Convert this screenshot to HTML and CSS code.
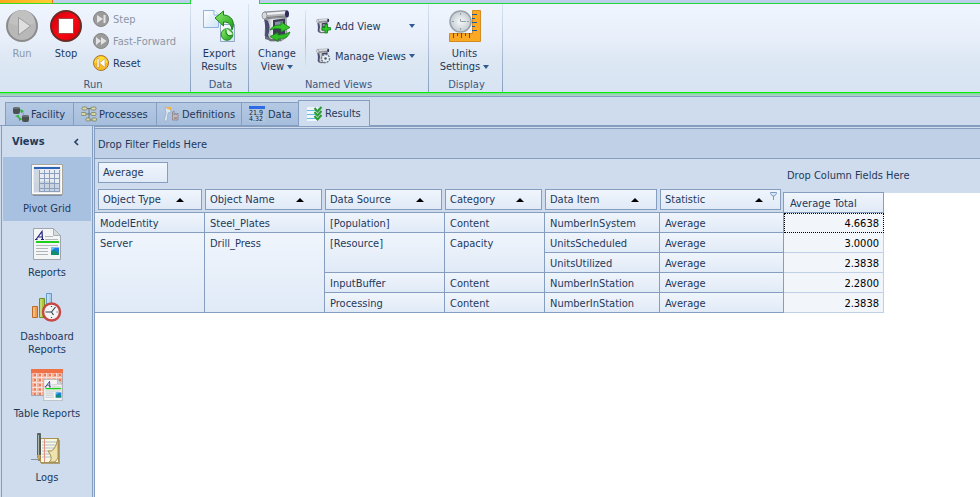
FILE: index.html
```html
<!DOCTYPE html>
<html lang="en">
<head>
<meta charset="utf-8">
<title>Results</title>
<link rel="stylesheet" href="styles.css">
</head>
<body>
<svg class="defs" aria-hidden="true">
  <defs>
    <linearGradient id="green" x1="0" y1="0" x2="1" y2="1"><stop offset="0" stop-color="#8cf06a"/><stop offset="1" stop-color="#1f9a1c"/></linearGradient>
    <linearGradient id="page" x1="0" y1="0" x2="1" y2="1"><stop offset="0" stop-color="#fff"/><stop offset="1" stop-color="#cfe3f7"/></linearGradient>
    <linearGradient id="steel" x1="0" y1="0" x2="1" y2="0"><stop offset="0" stop-color="#8d8f95"/><stop offset=".35" stop-color="#eceef0"/><stop offset="1" stop-color="#a5a7ad"/></linearGradient>
    <linearGradient id="stop" x1="0" y1="0" x2="1" y2="1"><stop offset="0" stop-color="#c80010"/><stop offset=".5" stop-color="#ff0812"/><stop offset="1" stop-color="#d0000c"/></linearGradient>
    <radialGradient id="dial"><stop offset="0" stop-color="#f7f9fa"/><stop offset="1" stop-color="#c3ccd2"/></radialGradient>
    <symbol id="camera" viewBox="0 0 32 32">
      <path d="M5 8L25 6L26 27L20 31L9 31L4 26Z" fill="url(#steel)" stroke="#83858c" stroke-width=".8"/>
      <path d="M3 9L7 11Q10 18 7 25L10 31L4 27Q5 17 3 9Z" fill="#4a4b70"/>
      <path d="M12 10L24 8.500V24L12 26Z" fill="#3a3c54"/>
      <path d="M14 12L22 11V16L14 17Z" fill="#8a91ac"/>
      <path d="M3 2L26 .500Q28 4 26 7L4 9Q1 6 3 2Z" fill="#b2b4b9" stroke="#77797f" stroke-width=".8"/>
      <path d="M5 4L24 2.500" stroke="#f2f3f5" stroke-width="2"/>
      <path d="M6 7.500L24 6" stroke="#777980"/>
      <ellipse cx="3.500" cy="5.500" rx="2.500" ry="3.500" fill="#d8d9dc" stroke="#85878d" stroke-width=".8"/>
      <ellipse cx="26" cy="4" rx="2" ry="3.500" fill="#2c2c5c"/>
      <path d="M4 26L11 29L20 28.500V31H10L4 29Z" fill="#6e7078"/>
    </symbol>
    <symbol id="report" viewBox="0 0 28 32">
      <path d="M.5.500H20.500L27.500 7.500V31.500H.5Z" fill="#f4f5f5" stroke="#9fa5aa"/>
      <path d="M20.500.500V7.500H27.500Z" fill="#d5dadd" stroke="#aab0b5"/>
      <path d="M3 11.500L9 3.500L9.500 11.500M5.500 9H9M2 11.500H4.500M8 11.500H11" fill="none" stroke="#28257c" stroke-width="1.200"/>
      <path d="M12 8.500H20M12 11.500H25M3 17.500H25" stroke="#b4b8ba"/>
      <path d="M3 14H26" stroke="#20ce1c" stroke-width="2"/>
      <path d="M3 20.500H15M3 23.500H15M3 26.500H15" stroke="#aeb4b7"/>
      <path d="M18 19.500H26V27H18Z" fill="#1b7de0"/><path d="M18 27V24L21 22L26 25V27Z" fill="#128d70"/><path d="M18 20H22L18 23Z" fill="#5cc6f2"/>
    </symbol>
  </defs>
</svg>

<header class="ribbon">
  <div class="ribbon-tabs"><span class="app-tab"></span><span class="strip"></span><span class="open-tab"></span><span class="strip rest"></span></div>
  <div class="groups">
    <section class="group run-group">
      <div class="tools">
        <button class="big" disabled>
          <svg class="i32" viewBox="0 0 32 32"><circle cx="16" cy="16" r="15" fill="#b8b8b8" stroke="#8b8b8b" stroke-width="2"/><path d="M3 13A13 13 0 0 1 29 13Q16 19 3 13Z" fill="#c1c1c1"/><path d="M12.500 7.500L24.500 16L12.500 25Z" fill="#dedede" stroke="#9b9b9b"/></svg>
          <span>Run</span>
        </button>
        <button class="big">
          <svg class="i32" viewBox="0 0 32 32"><circle cx="16" cy="16" r="15" fill="url(#stop)" stroke="#6b2a24" stroke-width="2"/><path d="M8.500 8.500H23.500V23.500H8.500Z" fill="#fff" stroke="#a44"/></svg>
          <span>Stop</span>
        </button>
        <div class="stack">
          <button class="small" disabled><svg class="i16" viewBox="0 0 16 16"><circle cx="8" cy="8" r="7.500" fill="#9b9b9b" stroke="#858585"/><path d="M4 4L10 8L4 12ZM10.500 4H12.500V12H10.500Z" fill="#e4e4e4"/></svg>Step</button>
          <button class="small" disabled><svg class="i16" viewBox="0 0 16 16"><circle cx="8" cy="8" r="7.500" fill="#9b9b9b" stroke="#858585"/><path d="M3 4L8 8L3 12ZM8 4L13.500 8L8 12Z" fill="#e4e4e4"/></svg>Fast-Forward</button>
          <button class="small"><svg class="i16" viewBox="0 0 16 16"><circle cx="8" cy="8" r="7.500" fill="#f8bd1c" stroke="#a9743a"/><path d="M1.500 8A6.500 6.500 0 0 1 14.500 8Z" fill="#ffe02e"/><path d="M4 3.500H6V12.500H4ZM12 3.500V12.500L6.500 8Z" fill="#fff" stroke="#c6924a" stroke-width=".6"/></svg>Reset</button>
        </div>
      </div>
      <h2>Run</h2>
    </section>
    <section class="group data-group">
      <div class="tools">
        <button class="big">
          <svg class="i32" viewBox="0 0 32 32"><path d="M.5.500H11L15.500 5V17.500H.5Z" fill="url(#page)" stroke="#8db4dc"/><path d="M11 .5V5H15.500" fill="#fff" stroke="#8db4dc"/><path d="M17.500 14.500H31.500V31.500H17.500Z" fill="url(#page)" stroke="#91a7c4"/><path d="M12 8L20.500 1V5C28 5 33 12 29 20C28 14 26 12 20.500 12V16Z" fill="url(#green)" stroke="#17811a"/><circle cx="24" cy="24.500" r="5.800" fill="url(#green)" stroke="#188b1b"/><path d="M23.500 18.500L30 24L26 25.500Q23 23 23.500 18.500Z" fill="#dff3dc"/><path d="M23 20Q22 26 28.500 26" fill="none" stroke="#137c17"/></svg>
          <span>Export<br>Results</span>
        </button>
      </div>
      <h2>Data</h2>
    </section>
    <section class="group views-group">
      <div class="tools">
        <button class="big">
          <svg class="i32" viewBox="0 0 32 32"><use href="#camera" width="32" height="32"/><path d="M9 20Q12 14.500 20 15V12L29 17.500L20 22V19Q14 17.500 9 20Z" fill="#35c92b" stroke="#177a18" stroke-width=".8"/><path d="M29 22Q27 29.500 17 29V31.500L9 26.500L17 22.500V25Q24 25.500 29 22Z" fill="#2fbe26" stroke="#177a18" stroke-width=".8"/></svg>
          <span>Change<br>View <i class="drop"></i></span>
        </button>
        <div class="divider"></div>
        <div class="stack wide">
          <button class="small"><svg class="i16" viewBox="0 0 16 16"><use href="#camera" width="15" height="16"/><path d="M9 6.500H11.500V9.500H14.500V12H11.500V15H9V12H6V9.500H9Z" fill="#2dc926" stroke="#0b8512" stroke-width=".8"/></svg>Add View<i class="drop"></i></button>
          <button class="small"><svg class="i16" viewBox="0 0 16 16"><use href="#camera" width="15" height="16"/><circle cx="9.500" cy="10.500" r="4" fill="#e3eaf0" stroke="#6d7d8d" stroke-width="1.500" stroke-dasharray="2 1"/><circle cx="9.500" cy="10.500" r="3" fill="#e9eff4"/><circle cx="9.500" cy="10.500" r="1.300" fill="#4d5a6a"/></svg>Manage Views<i class="drop"></i></button>
        </div>
      </div>
      <h2>Named Views</h2>
    </section>
    <section class="group display-group">
      <div class="tools">
        <button class="big">
          <svg class="i32" viewBox="0 0 32 32"><path d="M23.500.500H31.500V31.500H.5V23.500H23.500Z" fill="#fba922" stroke="#d28c22"/><path d="M23 4.500H28M23 8.500H26M23 12.500H28M23 16.500H26M23 20.500H28M4.500 23V28M8.500 23V26M12.500 23V28M16.500 23V26M20.500 23V28" stroke="#1c5b9c"/><circle cx="11.500" cy="11.500" r="10.500" fill="url(#dial)" stroke="#98a2a8" stroke-width="1.500"/><path d="M11.500 3V5M11.500 18V20M3 11.500H5M18 11.500H20M11.500 9V11.500H17" fill="none" stroke="#96a0a7"/></svg>
          <span>Units<br>Settings <i class="drop"></i></span>
        </button>
      </div>
      <h2>Display</h2>
    </section>
  </div>
</header>

<nav class="tabs">
  <a href="#facility" class="tab facility"><svg class="i16" viewBox="0 0 16 16"><rect x="0" y="1" width="7" height="7" rx="2" fill="#4c5052"/><path d="M1 2H6" stroke="#888e91"/><rect x="9" y="9" width="7" height="7" rx="2" fill="#4c5052"/><path d="M10 10H15" stroke="#888e91"/><path d="M9 5L11 9M4 9L6 13L9 13" fill="none" stroke="#8a9ba8"/><path d="M7 3L11 5L8 7ZM2 10L6 9L6 12ZM6 11L9 13L6 15Z" fill="#28b62d"/></svg>Facility</a>
  <a href="#processes" class="tab processes"><svg class="i16" viewBox="0 0 16 16"><path d="M3 2.500H12M8 2V14M3 8H13M8 14H13" stroke="#6e7b78" fill="none"/><g fill="#d8d9a4" stroke="#7b8064" stroke-width=".8"><rect x="1" y="1" width="5" height="3" rx="1"/><rect x="0" y="6.500" width="5" height="3" rx="1"/><rect x="10" y="1" width="5" height="3" rx="1"/><rect x="10" y="6.500" width="5" height="3" rx="1"/><rect x="5" y="12" width="4" height="3" rx="1"/><rect x="11" y="12" width="4.500" height="3" rx="1"/></g></svg>Processes</a>
  <a href="#definitions" class="tab definitions"><svg class="i16" viewBox="0 0 16 16"><path d="M1 1L6 2L7 6L4 7L3 15H0L2 7Z" fill="#dce8f1" stroke="#9aaabd" stroke-width=".7"/><path d="M2 1L7 1L7 4L3 3Z" fill="#f1b14c"/><path d="M8.500 14V6L10 5V9L12 7V9L14 7V14Z" fill="#c9b9b4" stroke="#8a8288" stroke-width=".8"/><path d="M10 12H13" stroke="#776f7a"/></svg>Definitions</a>
  <a href="#data" class="tab data"><svg class="i16" viewBox="0 0 16 16"><path d="M0 0H16V3H0Z" fill="#2e6be4"/><path d="M0 3H16V16H0Z" fill="#b4c6dc"/><text x="0" y="9">21.9</text><text x="0" y="15">4.32</text></svg>Data</a>
  <a href="#results" class="tab results" aria-current="page"><svg class="i16" viewBox="0 0 16 16"><path d="M0 1H11V15H0Z" fill="#eef7fc"/><path d="M0 4.500H9M0 8.500H9M0 12.500H9" stroke="#6bb9d9"/><path d="M7.500 2L10.500 5.500L14.500 1M7.500 6L10.500 9.500L14.500 5M7.500 10L10.500 13.500L14.500 9" fill="none" stroke="#2a9c32" stroke-width="2"/></svg>Results</a>
</nav>

<div class="workspace">
  <aside class="sidebar">
    <div class="side-head"><h2>Views</h2><button aria-label="Collapse"><svg viewBox="0 0 6 8"><path d="M5 1L2 4L5 7" fill="none" stroke="#2d4468" stroke-width="1.700"/></svg></button></div>
    <a href="#pivot" class="view selected"><svg class="i32" viewBox="0 0 32 32"><path d="M2 31H31" stroke="#8191aa" stroke-width="2"/><path d="M1.500 1.500H30.500V29.500H1.500Z" fill="#e9edf1" stroke="#fff"/><path d="M.5.500H31.500V30.500H.5Z" fill="none" stroke="#a8a59f"/><path d="M3 3H29V5H3Z" fill="#2e62b4"/><path d="M3 5H8V28H3Z" fill="#cfd7e0"/><path d="M3 19Q18 14 29 21V28H3Z" fill="#cbd3de"/><path d="M8.500 6V28M13.500 6V28M18.500 6V28M23.500 6V28M28.500 6V28M8 9.500H29M8 14.500H29M8 19.500H29M8 24.500H29M8 27.500H29" stroke="#8b9fbf"/></svg>Pivot Grid</a>
    <a href="#reports" class="view"><svg class="i32" viewBox="0 0 32 32"><use href="#report" x="2" width="28" height="32"/></svg>Reports</a>
    <a href="#dashboard" class="view"><svg class="i32" viewBox="0 0 32 32"><path d="M1.500 14.500H6.500V25.500H1.500Z" fill="#f29d4b" stroke="#ba6b27"/><path d="M8.500 6.500H13.500V25.500H8.500Z" fill="#a9ca3c" stroke="#6f8f24"/><path d="M15.500 1.500H20.500V14H15.500Z" fill="#a8d2f4" stroke="#6797c6"/><path d="M3 15V25M10 7V25M17 2V14" stroke="#fff" stroke-opacity=".6"/><circle cx="20.500" cy="20" r="8.500" fill="#f3f5f5" stroke="#c54944" stroke-width="2.500"/><path d="M20.500 14V15M26.500 20H25.500M20.500 26V25M15.500 20H14.500M24.500 15L20.500 20H15.500M20.500 20L22.500 23" fill="none" stroke="#36465a" stroke-width="1.200"/></svg>Dashboard<br>Reports</a>
    <a href="#tables" class="view"><svg class="i32" viewBox="0 0 32 32"><path d="M.5.500H31.500V26.500H.5Z" fill="#f5b39e" stroke="#a9a3ac"/><path d="M0 0H32V4H0Z" fill="#ee7148"/><path d="M5.500 4V26M10.500 4V26M15.500 4V26M20.500 4V26M25.500 4V26M1 8.500H31M1 13.500H31M1 18.500H31M1 22.500H31" stroke="#f7ded5"/><path d="M3 6H30M3 11H30M3 16H30M3 20.500H30M3 25H30" stroke="#e8795a" stroke-width="2" stroke-dasharray="2 3"/><use href="#report" x="12" y="10" width="20" height="22"/></svg>Table Reports</a>
    <a href="#logs" class="view"><svg class="i32" viewBox="0 0 32 32"><path d="M8 7H29V31H10Z" fill="#aaa07e"/><path d="M9.500 5.500H27.500V29.500H9.500Z" fill="#fbf7dc" stroke="#aa9152"/><path d="M11 9H27M11 12H27M11 15H27M11 18H27M11 21H27M11 24H27" stroke="#a9bfd2"/><path d="M13.500 6V29" stroke="#e2928a"/><path d="M18 29Q23 26 17 18Q24 20 27 5.500V25L24 29Z" fill="#eee2ae" stroke="#a79254"/><path d="M6.500.500H9.500V23L8 28L6.500 23Z" fill="#53615c" stroke="#303b3a" stroke-width=".6"/><path d="M7.500 2V22" stroke="#a9b8af"/><path d="M0 26.500H8" stroke="#8292a1"/><path d="M6 22H10L8 28Z" fill="#c7a457"/></svg>Logs</a>
  </aside>

  <main class="pivot">
    <div class="filter-area">Drop Filter Fields Here</div>
    <div class="drop-row"><button class="field">Average</button><span class="column-area">Drop Column Fields Here</span></div>
    <table>
      <colgroup><col class="c-type"><col class="c-name"><col class="c-source"><col class="c-cat"><col class="c-item"><col class="c-stat"><col class="c-total"></colgroup>
      <thead>
        <tr>
          <th><button class="field">Object Type<i class="asc"></i></button></th>
          <th><button class="field">Object Name<i class="asc"></i></button></th>
          <th><button class="field">Data Source<i class="asc"></i></button></th>
          <th><button class="field">Category<i class="asc"></i></button></th>
          <th><button class="field">Data Item<i class="asc"></i></button></th>
          <th><button class="field">Statistic<i class="asc"></i><svg class="funnel" viewBox="0 0 7 8"><path d="M.5.500H6.500V1.500L4.500 4H2.500L.5 1.500Z" fill="#dce7f4" stroke="#7b98c2"/><path d="M3.500 4V8" stroke="#7b98c2"/></svg></button></th>
          <th class="total"><div>Average Total</div></th>
        </tr>
      </thead>
      <tbody>
        <tr><td>ModelEntity</td><td>Steel_Plates</td><td>[Population]</td><td>Content</td><td>NumberInSystem</td><td>Average</td><td class="value focused">4.6638</td></tr>
        <tr><td rowspan="4">Server</td><td rowspan="4">Drill_Press</td><td rowspan="2">[Resource]</td><td rowspan="2">Capacity</td><td>UnitsScheduled</td><td>Average</td><td class="value">3.0000</td></tr>
        <tr><td>UnitsUtilized</td><td>Average</td><td class="value">2.3838</td></tr>
        <tr><td>InputBuffer</td><td>Content</td><td>NumberInStation</td><td>Average</td><td class="value">2.2800</td></tr>
        <tr><td>Processing</td><td>Content</td><td>NumberInStation</td><td>Average</td><td class="value">2.3838</td></tr>
      </tbody>
    </table>
  </main>
</div>
</body>
</html>
```
FILE: styles.css
```css
:root {
  --ink: #1e395b;
  --line: #859ebf;
  --panel: #cfdced;
  --area: #c0d0e6;
}
*, ::before, ::after { box-sizing: border-box; }
body {
  margin: 0;
  min-height: 100vh;
  display: flex;
  flex-direction: column;
  font: 11px/13px "DejaVu Sans Condensed", "DejaVu Sans", sans-serif;
  color: var(--ink);
  background: var(--panel);
}
h2 { margin: 0; font-size: 11px; line-height: 13px; }
button { font: inherit; color: inherit; margin: 0; padding: 0; border: 0; background: none; white-space: nowrap; }
a { color: inherit; text-decoration: none; }
svg { display: block; flex: none; }
.defs { position: absolute; width: 0; height: 0; }
.i32 { width: 32px; height: 32px; }
.i16 { width: 16px; height: 16px; }

/* Ribbon */
.ribbon { border-bottom: 1px solid var(--line); background: linear-gradient(#eff6ff, #e8effa 40%, #dde8f4 60%, #d7e3f2); }
.ribbon-tabs { display: flex; height: 4px; }
.app-tab { width: 53px; background: linear-gradient(90deg, #f9a81d, #ffcf33); border-right: 1px solid #e8741c; border-bottom: 1px solid #3fdc1c; }
.strip { width: 138px; background: #bccfe8; border-bottom: 1px solid #1fd83a; border-right: 1px solid #1fd83a; }
.open-tab { width: 68px; }
.rest { flex: 1; border-right: 0; border-left: 1px solid #1fd83a; }
.groups { display: flex; height: 88px; }
.ribbon::after { content: ""; display: block; height: 4px; border-top: 1px solid #00f000; background: linear-gradient(#7fd59a, #b5cfd6); }
.group {
  display: flex;
  flex-direction: column;
  padding: 6px 6px 1px 0;
  border-right: 1px solid;
  border-image: linear-gradient(#dbe6f3, #859ebf) 1;
}
.run-group { width: 191px; }
.data-group { width: 58px; }
.views-group { width: 180px; }
.display-group { width: 74px; }
.group h2 { text-align: center; font-weight: normal; color: #40587c; padding-left: 2px; }
.views-group h2 { padding-left: 6px; }
.tools { display: flex; flex: 1; }
.big { width: 44px; display: flex; flex-direction: column; align-items: center; gap: 5px; text-align: center; }
.data-group .big { width: 56px; }
.views-group .big { width: 58px; }
.display-group .big { width: 71px; }
.data-group, .display-group { padding-right: 0; }
.big:disabled, .small:disabled { color: #8d97a5; }
.stack { display: flex; flex-direction: column; gap: 6px; padding: 1px 0 0 5px; }
.small { display: flex; align-items: center; gap: 4px; height: 16px; }
.wide { flex: 1; gap: 14px; padding: 8px 0 0 10px; }
.wide .small { gap: 3px; }
.wide .drop { margin-left: auto; margin-right: 7px; }
.divider { width: 1px; margin-bottom: 8px; background: linear-gradient(#dfe8f3, #a9bdd8, #dfe8f3); }
.drop { display: inline-block; border: 3px solid transparent; border-top: 4px solid #2f5a92; border-bottom: 0; margin-bottom: 1px; }

/* Document tabs */
.tabs { display: flex; align-items: flex-end; height: 29px; padding-left: 5px; border-bottom: 1px solid var(--line); }
.tab {
  display: flex;
  align-items: center;
  gap: 2px;
  height: 23px;
  padding-left: 7px;
  border: 1px solid var(--line);
  border-bottom: 0;
  border-right: 0;
  background: linear-gradient(#b4c8e2, #a6bedd);
}
.facility { width: 68px; }
.processes { width: 83px; }
.definitions { width: 85px; }
.data { width: 57px; gap: 3px; }
.data text { font: 7px "DejaVu Sans Condensed", sans-serif; fill: #111d30; }
.data svg { overflow: visible; }
.results { width: 72px; height: 26px; margin-bottom: -1px; padding-left: 8px; border-right: 1px solid var(--line); background: var(--panel); }

/* Workspace */
.workspace { display: flex; flex: 1; }
.sidebar { width: 92px; margin-left: 1px; border: solid var(--line); border-width: 0 1px; padding: 0 1px; }
.side-head { display: flex; justify-content: space-between; align-items: center; height: 31px; padding: 0 12px 0 9px; }
.side-head svg { width: 6px; height: 8px; }
.view { display: block; padding: 7px 0 6px; text-align: center; }
.view svg { margin: 0 auto 6px; }
.selected { background: #a9c1e0; }

/* Pivot grid */
.pivot { flex: 1; margin-left: 1px; border: solid var(--line); border-width: 1px 0 0 1px; background: #fff; min-width: 0; }
.filter-area { border-top: 1px solid var(--panel); box-shadow: inset 0 1px var(--line); border-bottom: 1px solid var(--line); height: 32px; padding: 10px 3px 0; background: var(--area); }
.drop-row { display: flex; align-items: flex-start; height: 34px; padding: 3px 3px 0; background: var(--panel); }
.drop-row .field { width: 70px; }
.field {
  position: relative;
  display: flex;
  align-items: center;
  justify-content: space-between;
  width: 100%;
  height: 21px;
  padding: 0 17px 0 4px;
  border: 1px solid var(--line);
  background: linear-gradient(#f0f5fc, #e0eaf7);
}
.column-area { margin: 7px 0 0 619px; white-space: nowrap; }
.asc { border: 4px solid transparent; border-bottom: 4px solid #000; border-top: 0; }
.funnel { position: absolute; right: 3px; top: 2px; width: 7px; height: 8px; }
table { table-layout: fixed; width: 789px; margin-top: -4px; border-collapse: separate; border-spacing: 0; }
.c-type { width: 110px; }
.c-name, .c-source { width: 120px; }
.c-cat { width: 100px; }
.c-item { width: 115px; }
.c-stat { width: 124px; }
.c-total { width: 100px; }
th { height: 24px; padding: 0 3px 2px 0; font-weight: normal; text-align: left; background: var(--panel); border-bottom: 1px solid var(--line); }
th:first-child { padding-left: 3px; }
th.total { padding: 3px 0 0; }
.total div { height: 20px; margin-left: -1px; padding: 4px 6px 0; border: 1px solid var(--line); border-bottom: 0; background: linear-gradient(#f0f5fc, #e0eaf7); }
td {
  height: 20px;
  padding: 4px 5px 2px;
  vertical-align: top;
  border: solid var(--line);
  border-width: 0 1px 1px 0;
  background: linear-gradient(#f0f5fc, #e0eaf7);
}
.value { color: #000; text-align: right; padding-right: 4px; background: #f2f5fa; border-color: var(--area); }
.focused { outline: 1px dotted #000; outline-offset: -1px; border-color: transparent; }
```
